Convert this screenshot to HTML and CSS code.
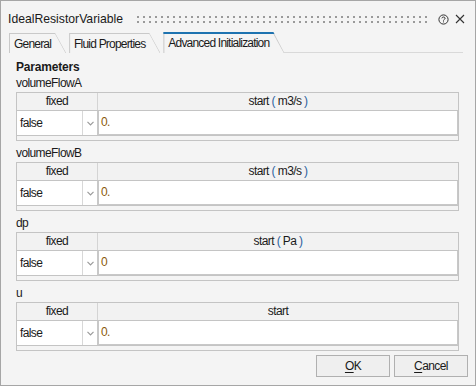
FILE: index.html
```html
<!DOCTYPE html>
<html>
<head>
<meta charset="utf-8">
<link rel="stylesheet" href="styles.css">
</head>
<body>
<div class="window">
  <div class="titlebar">
    <span class="title">IdealResistorVariable</span>
    <div class="grip"></div>
    <svg class="help" width="11" height="11" viewBox="0 0 11 11"><circle cx="5.5" cy="5.5" r="4.6" fill="none" stroke="#333" stroke-width="1"/><path d="M3.9 4.3 C3.9 2.6 7.1 2.6 7.1 4.3 C7.1 5.4 5.5 5.4 5.5 6.6" fill="none" stroke="#333" stroke-width="1"/><rect x="5" y="7.4" width="1" height="1" fill="#333"/></svg>
    <svg class="close" width="10" height="10" viewBox="0 0 10 10"><path d="M1 1 L9 9 M9 1 L1 9" stroke="#333" stroke-width="1.1"/></svg>
  </div>
  <div class="tabs">
    <div class="tab"><span>General</span></div>
    <div class="tab"><span>Fluid Properties</span></div>
    <div class="tab active"><span>Advanced Initialization</span></div>
    <div class="tabfill"></div>
  </div>
  <div class="content">
    <div class="group">Parameters</div>

    <div class="param">
      <div class="pname">volumeFlowA</div>
      <div class="grid">
        <div class="head"><div class="hc first">fixed</div><div class="hc">start <span class="par">(</span> m3/s <span class="par">)</span></div></div>
        <div class="row"><div class="combo"><span class="ctext">false</span><span class="carrow"><svg width="7" height="5" viewBox="0 0 7 5"><path d="M0.5 0.8 L3.5 3.8 L6.5 0.8" fill="none" stroke="#9a9a9a" stroke-width="1.2"/></svg></span></div><div class="val">0.</div></div>
        <div class="strip"></div>
      </div>
    </div>

    <div class="param">
      <div class="pname">volumeFlowB</div>
      <div class="grid">
        <div class="head"><div class="hc first">fixed</div><div class="hc">start <span class="par">(</span> m3/s <span class="par">)</span></div></div>
        <div class="row"><div class="combo"><span class="ctext">false</span><span class="carrow"><svg width="7" height="5" viewBox="0 0 7 5"><path d="M0.5 0.8 L3.5 3.8 L6.5 0.8" fill="none" stroke="#9a9a9a" stroke-width="1.2"/></svg></span></div><div class="val">0.</div></div>
        <div class="strip"></div>
      </div>
    </div>

    <div class="param">
      <div class="pname">dp</div>
      <div class="grid">
        <div class="head"><div class="hc first">fixed</div><div class="hc">start <span class="par">(</span> Pa <span class="par">)</span></div></div>
        <div class="row"><div class="combo"><span class="ctext">false</span><span class="carrow"><svg width="7" height="5" viewBox="0 0 7 5"><path d="M0.5 0.8 L3.5 3.8 L6.5 0.8" fill="none" stroke="#9a9a9a" stroke-width="1.2"/></svg></span></div><div class="val">0</div></div>
        <div class="strip"></div>
      </div>
    </div>

    <div class="param">
      <div class="pname">u</div>
      <div class="grid">
        <div class="head"><div class="hc first">fixed</div><div class="hc">start</div></div>
        <div class="row"><div class="combo"><span class="ctext">false</span><span class="carrow"><svg width="7" height="5" viewBox="0 0 7 5"><path d="M0.5 0.8 L3.5 3.8 L6.5 0.8" fill="none" stroke="#9a9a9a" stroke-width="1.2"/></svg></span></div><div class="val">0.</div></div>
        <div class="strip"></div>
      </div>
    </div>
  </div>
  <div class="buttons">
    <button class="btn"><u>O</u>K</button>
    <button class="btn"><u>C</u>ancel</button>
  </div>
</div>
</body>
</html>
```

FILE: styles.css
```css
html, body {
  margin: 0;
  padding: 0;
  background: #f4f4f4;
}
.window {
  box-sizing: border-box;
  width: 476px;
  height: 386px;
  border: 1px solid #a6a6a6;
  background: #f4f4f4;
  font-family: "Liberation Sans", Arial, sans-serif;
  font-size: 12px;
  letter-spacing: -0.6px;
  color: #1a1a1a;
  display: flex;
  flex-direction: column;
}
.titlebar {
  height: 30px;
  display: flex;
  align-items: center;
  padding: 6px 9px 0 7px;
  box-sizing: border-box;
}
.title {
  font-size: 12.2px;
  letter-spacing: 0;
  color: #1a1a1a;
}
.grip {
  flex: 1;
  height: 7px;
  margin: 0 10px 0 14px;
  background-image: radial-gradient(circle at 1px 1px, #9a9a9a 0.9px, transparent 1.1px);
  background-size: 6px 5px;
  background-repeat: repeat;
}
.help {
  margin-right: 6px;
}
.close {
  margin-right: 1px;
}
.tabs {
  display: flex;
  align-items: flex-end;
  height: 22px;
  padding-left: 8px;
  letter-spacing: -0.8px;
}
.tab {
  position: relative;
  height: 20px;
  padding: 0 15px 0 5px;
  margin-right: 3px;
  display: flex;
  align-items: center;
  background: #c9c9c9;
  clip-path: polygon(0 0, calc(100% - 11px) 0, 100% 100%, 0 100%);
}
.tab::before {
  content: "";
  position: absolute;
  left: 1px;
  top: 1px;
  right: 0;
  bottom: 0;
  background: #f4f4f4;
  clip-path: polygon(0 0, calc(100% - 11px) 0, calc(100% - 0.6px) 100%, 0 100%);
}
.tab span {
  position: relative;
  padding-top: 1px;
}
.tab.active {
  height: 21px;
  background: #c9c9c9;
}
.tab.active::before {
  top: 2px;
}
.tab.active::after {
  content: "";
  position: absolute;
  left: 0;
  top: 0;
  right: 0;
  height: 2px;
  background: #1e73b0;
}
.tabfill {
  flex: 1;
  height: 21px;
  border-bottom: 1px solid #d9d9d9;
  margin-left: -3px;
  margin-right: 12px;
  box-sizing: border-box;
}
.content {
  flex: 1;
  padding: 6px 16px 0 15px;
}
.group {
  font-weight: bold;
  letter-spacing: -0.2px;
  line-height: 16px;
  height: 16px;
}
.pname {
  line-height: 16px;
  height: 17px;
}
.param {
  margin-bottom: 4px;
}
.grid {
  border: 1px solid #c4c4c4;
  background: #f4f4f4;
}
.head {
  display: grid;
  grid-template-columns: 81px 1fr;
  height: 17px;
  border-bottom: 1px solid #c4c4c4;
  background: #f2f2f2;
}
.hc {
  text-align: center;
  line-height: 17px;
  color: #1a1a1a;
}
.hc.first {
  border-right: 1px solid #d4d4d4;
}
.par {
  color: #2b5f9e;
}
.row {
  display: grid;
  grid-template-columns: 81px 1fr;
  height: 24px;
  background: #fff;
}
.combo {
  display: flex;
  border-right: 1px solid #c8c8c8;
}
.ctext {
  flex: 1;
  line-height: 24px;
  padding-left: 3px;
  border-right: 1px solid #d8d8d8;
}
.carrow {
  width: 14px;
  display: flex;
  align-items: center;
  justify-content: center;
}
.val {
  border-left: 1px solid #c8c8c8;
  border-right: 1px solid #c8c8c8;
  border-bottom: 1px solid #c8c8c8;
  line-height: 23px;
  padding-left: 2px;
  color: #8a5a08;
}
.strip {
  height: 4px;
  border-top: 1px solid #c4c4c4;
  background: #f4f4f4;
}
.buttons {
  display: flex;
  justify-content: flex-end;
  gap: 4px;
  padding: 0 7px 8px 0;
}
.btn {
  width: 74px;
  height: 22px;
  font-family: "Liberation Sans", Arial, sans-serif;
  font-size: 12px;
  letter-spacing: -0.6px;
  color: #1a1a1a;
  background: #efefef;
  border: 1px solid #b0b0b0;
  border-radius: 0;
  padding: 0;
}
.btn u {
  text-decoration: underline;
  text-underline-offset: 2px;
}
```
